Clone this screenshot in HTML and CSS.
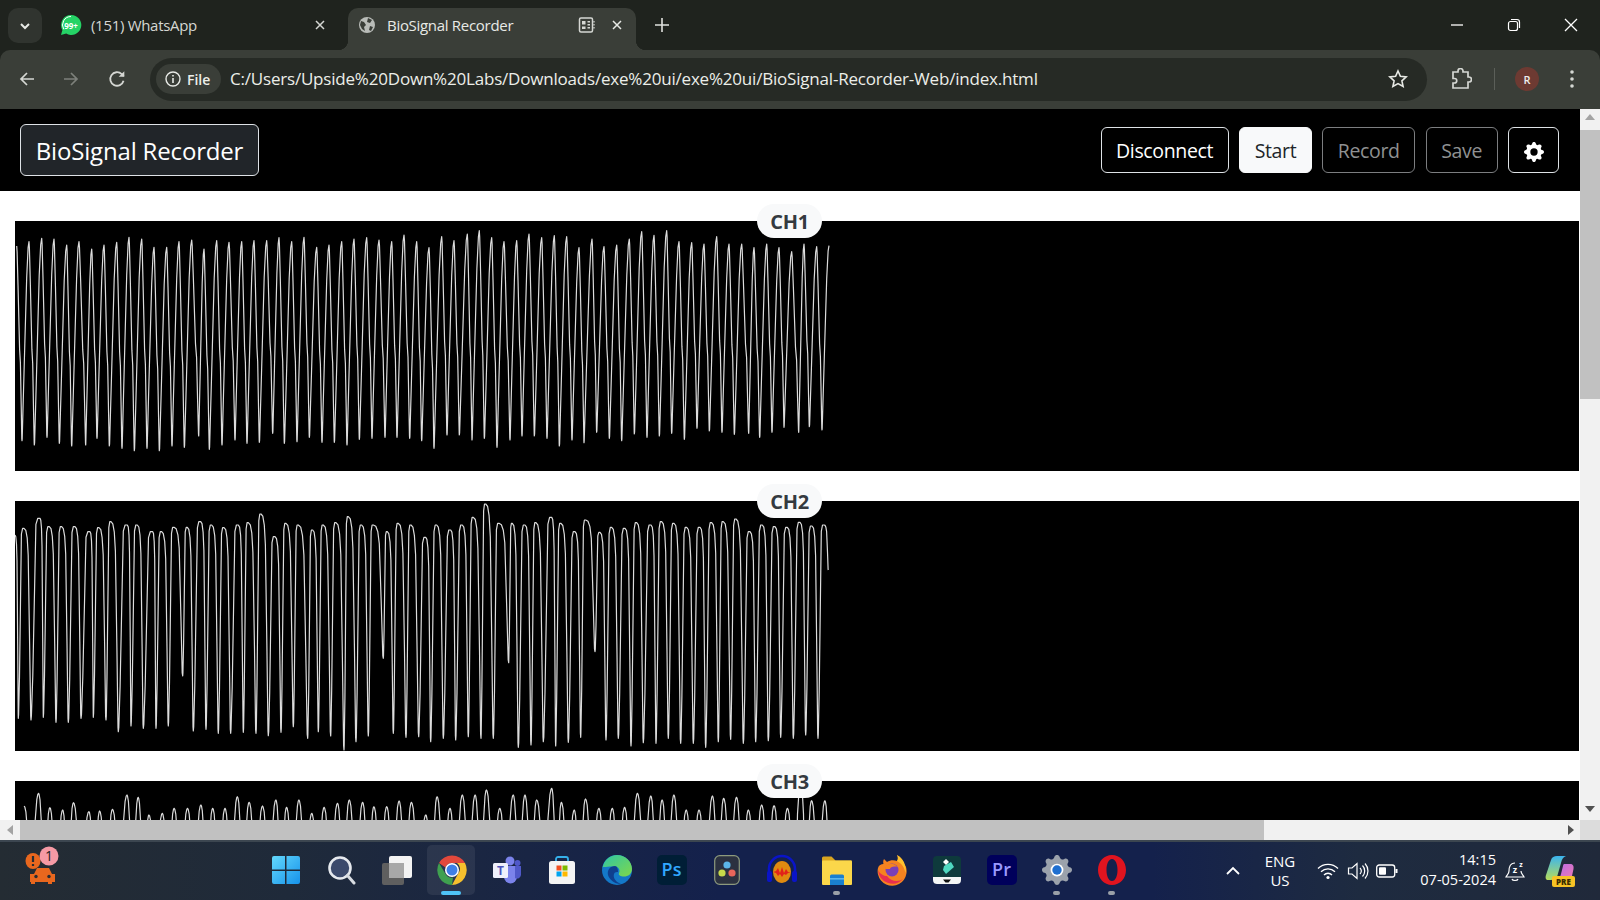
FILE: index.html
```html
<!DOCTYPE html>
<html lang="en">
<head>
    <meta charset="UTF-8">
    <title>BioSignal Recorder</title>
    <link rel="stylesheet" href="styles.css">
</head>
<body>
    <!-- browser tabs -->
    <div class="tabstrip">
        <div class="tab-search">
            <svg width="12" height="12" viewBox="0 0 12 12"><path d="M2 4l4 4 4-4" fill="none" stroke="#e8eae6" stroke-width="2"/></svg>
        </div>
        <div class="tab">
            <svg class="favicon" width="22" height="22" viewBox="0 0 22 22"><path d="M11 1a10 10 0 0 0-8.600 15L1 21l5.200-1.400A10 10 0 1 0 11 1z" fill="#25d366"/><path d="M11 2.500a8.500 8.500 0 0 0-7.300 12.800" fill="none" stroke="#fff" stroke-width="1"/><text x="11" y="14.500" class="favicon-count">99+</text></svg>
            <span class="tab-title">(151) WhatsApp</span>
            <svg class="tab-close" width="12" height="12" viewBox="0 0 12 12"><path d="M2 2l8 8M10 2l-8 8" stroke="#d5d7d3" stroke-width="1.500"/></svg>
        </div>
        <div class="tab tab-active">
            <svg class="favicon" width="18" height="18" viewBox="0 0 18 18"><circle cx="9" cy="9" r="8" fill="#b9bcb8"/><path d="M3 5l3 1 2 3-2 2 1 4-3-2-2-4zM10 2l4 2-2 3-3-1zM12 10l3 1-2 4-2-1z" fill="#3a3e38"/></svg>
            <span class="tab-title">BioSignal Recorder</span>
            <svg class="tab-reader" width="18" height="18" viewBox="0 0 18 18"><rect x="1.500" y="2" width="13" height="14" rx="1.500" fill="none" stroke="#d5d7d3" stroke-width="1.500"/><path d="M4 5h3.500v3.500H4zM4 10.500h3.500V13H4zM9.500 5H12v1.500H9.500zM9.500 8H12v1.500H9.500zM9.500 11H12v1.500H9.500z" fill="#d5d7d3"/><path d="M16 5v1.500M16 8v1.500M16 11v1.500" stroke="#d5d7d3" stroke-width="1.200"/></svg>
            <svg class="tab-close" width="12" height="12" viewBox="0 0 12 12"><path d="M2 2l8 8M10 2l-8 8" stroke="#e8eae6" stroke-width="1.500"/></svg>
        </div>
        <svg class="new-tab" width="14" height="14" viewBox="0 0 14 14"><path d="M7 0v14M0 7h14" stroke="#e0e2de" stroke-width="1.600"/></svg>
        <div class="window-controls">
            <svg width="14" height="14" viewBox="0 0 14 14"><path d="M1 7h12" stroke="#fff" stroke-width="1.300"/></svg>
            <svg width="14" height="14" viewBox="0 0 14 14"><rect x="1.500" y="3.500" width="9" height="9" rx="2" fill="none" stroke="#fff" stroke-width="1.200"/><path d="M4 1.500h6a2.500 2.500 0 0 1 2.500 2.500v6" fill="none" stroke="#fff" stroke-width="1.200"/></svg>
            <svg width="14" height="14" viewBox="0 0 14 14"><path d="M1 1l12 12M13 1L1 13" stroke="#fff" stroke-width="1.300"/></svg>
        </div>
    </div>

    <!-- address bar -->
    <div class="toolbar">
        <svg class="nav-icon" width="16" height="16" viewBox="0 0 16 16"><path d="M15 8H2M8 2L2 8l6 6" fill="none" stroke="#d5d7d3" stroke-width="1.700"/></svg>
        <svg class="nav-icon" width="16" height="16" viewBox="0 0 16 16"><path d="M1 8h13M8 2l6 6-6 6" fill="none" stroke="#7d807b" stroke-width="1.700"/></svg>
        <svg class="nav-icon" width="18" height="18" viewBox="0 0 16 16"><path d="M13.800 9.500A6 6 0 1 1 12.200 3.700L14 5.500" fill="none" stroke="#d5d7d3" stroke-width="1.600"/><path d="M14.500 1v5h-5z" fill="#d5d7d3"/></svg>
        <div class="omnibox">
            <div class="site-chip">
                <svg width="16" height="16" viewBox="0 0 16 16"><circle cx="8" cy="8" r="7" fill="none" stroke="#e8eae6" stroke-width="1.400"/><path d="M8 7v5M8 4v1.600" stroke="#e8eae6" stroke-width="1.600"/></svg>
                <span>File</span>
            </div>
            <span class="url">C:/Users/Upside%20Down%20Labs/Downloads/exe%20ui/exe%20ui/BioSignal-Recorder-Web/index.html</span>
            <svg class="star" width="20" height="20" viewBox="0 0 20 20"><path d="M10 2l2.400 5.300 5.800.6-4.300 3.900 1.200 5.700-5.100-2.900-5.100 2.900 1.200-5.700L1.800 7.900l5.800-.6z" fill="none" stroke="#e8eae6" stroke-width="1.600"/></svg>
        </div>
        <svg class="ext-icon" width="22" height="22" viewBox="0 0 22 22"><path d="M8 4V3a2.500 2.500 0 0 1 5 0v1h5v5h1a2.500 2.500 0 0 1 0 5h-1v6H3v-5h1.500a2 2 0 0 0 0-4.500H3V4z" fill="none" stroke="#d5d7d3" stroke-width="1.700"/></svg>
        <div class="toolbar-divider"></div>
        <div class="avatar">R</div>
        <svg class="menu-dots" width="4" height="18" viewBox="0 0 4 18"><circle cx="2" cy="2" r="1.800" fill="#d5d7d3"/><circle cx="2" cy="9" r="1.800" fill="#d5d7d3"/><circle cx="2" cy="16" r="1.800" fill="#d5d7d3"/></svg>
    </div>

    <div class="window-body">
        <div class="page">
            <header class="app-header">
                <div class="brand">BioSignal Recorder</div>
                <div class="actions">
                    <button class="btn">Disconnect</button>
                    <button class="btn btn-light">Start</button>
                    <button class="btn btn-disabled">Record</button>
                    <button class="btn btn-disabled">Save</button>
                    <button class="btn btn-icon" aria-label="Settings">
                        <svg width="20" height="20" viewBox="0 0 16 16"><path fill="#fff" d="M9.405 1.050c-.413-1.400-2.397-1.400-2.810 0l-.1.340a1.464 1.464 0 0 1-2.105.872l-.31-.17c-1.283-.698-2.686.705-1.987 1.987l.169.311c.446.820.023 1.841-.872 2.105l-.34.1c-1.400.413-1.400 2.397 0 2.810l.34.1a1.464 1.464 0 0 1 .872 2.105l-.17.31c-.698 1.283.705 2.686 1.987 1.987l.311-.169a1.464 1.464 0 0 1 2.105.872l.1.34c.413 1.400 2.397 1.400 2.810 0l.1-.34a1.464 1.464 0 0 1 2.105-.872l.31.17c1.283.698 2.686-.705 1.987-1.987l-.169-.311a1.464 1.464 0 0 1 .872-2.105l.34-.1c1.400-.413 1.400-2.397 0-2.810l-.34-.1a1.464 1.464 0 0 1-.872-2.105l.17-.31c.698-1.283-.705-2.686-1.987-1.987l-.311.169a1.464 1.464 0 0 1-2.105-.872l-.1-.34zM8 10.930a2.929 2.929 0 1 1 0-5.860 2.929 2.929 0 0 1 0 5.858z"/></svg>
                    </button>
                </div>
            </header>
            <main class="channels">
                <section class="channel"><span class="channel-label">CH1</span><svg class="trace" id="ch1"></svg></section>
                <section class="channel"><span class="channel-label">CH2</span><svg class="trace" id="ch2"></svg></section>
                <section class="channel"><span class="channel-label">CH3</span><svg class="trace" id="ch3"></svg></section>
            </main>
        </div>
        <div class="vscroll">
            <div class="arrow arrow-up"></div>
            <div class="vthumb"></div>
            <div class="arrow arrow-down"></div>
        </div>
    </div>

    <div class="hscroll">
        <div class="arrow arrow-left"></div>
        <div class="hthumb"></div>
        <div class="arrow arrow-right"></div>
        <div class="scroll-corner"></div>
    </div>

    <!-- windows taskbar -->
    <footer class="taskbar">
        <div class="taskbar-left">
            <svg width="40" height="40" viewBox="0 0 40 40"><ellipse cx="13" cy="15" rx="7.500" ry="8" fill="#e8671e"/><path d="M13 10v6M13 18v2" stroke="#262c33" stroke-width="2.200"/><path d="M14 28l3-6h12l3 6h3v8h-3v2h-4v-2H15v2h-4v-2H10v-8z" fill="#e8671e"/><circle cx="16" cy="30.500" r="1.700" fill="#262c33"/><circle cx="29" cy="30.500" r="1.700" fill="#262c33"/><circle cx="29" cy="10" r="9.500" fill="#f59aa5"/><text x="29" y="15" class="alert-count">1</text></svg>
        </div>
        <div class="taskbar-apps">
            <div class="app app-start">
                <svg width="30" height="30" viewBox="0 0 30 30"><defs><linearGradient id="win" x1="0" y1="0" x2="1" y2="1"><stop offset="0" stop-color="#63d8fc"/><stop offset="1" stop-color="#1692ea"/></linearGradient></defs><path d="M1 3a2 2 0 0 1 2-2h11v13.500H1zM15.500 1H27a2 2 0 0 1 2 2v11.500H15.500zM1 16h13v13H3a2 2 0 0 1-2-2zM15.500 16H29v11a2 2 0 0 1-2 2H15.500z" fill="url(#win)"/></svg>
            </div>
            <div class="app">
                <svg width="30" height="30" viewBox="0 0 30 30"><circle cx="13" cy="13" r="10.500" fill="#3c4a6c" stroke="#e6e9ee" stroke-width="2.600"/><path d="M20.500 20.500L27 28" stroke="#d8dce2" stroke-width="3" stroke-linecap="round"/></svg>
            </div>
            <div class="app">
                <svg width="32" height="32" viewBox="0 0 32 32"><rect x="1" y="9" width="22" height="22" rx="2" fill="#5f5f5f"/><rect x="8" y="2" width="23" height="22" rx="2" fill="#f3f3f3"/><rect x="8" y="9" width="15" height="15" fill="#a8a8a8"/></svg>
            </div>
            <div class="app app-active">
                <svg width="30" height="30" viewBox="0 0 30 30"><path d="M2 8A15 15 0 0 1 28 8H15a7 7 0 0 0-6.500 4.500z" fill="#e2483b"/><path d="M28 8a15 15 0 0 1-13 22l6.200-11.500A7 7 0 0 0 20 8z" fill="#f6c02d"/><path d="M15 30A15 15 0 0 1 2 8l6.500 11a7 7 0 0 0 7.500 3.500z" fill="#3fa04f"/><circle cx="15" cy="15" r="7" fill="#fff"/><circle cx="15" cy="15" r="5.500" fill="#3f7fe6"/></svg>
                <span class="run-active"></span>
            </div>
            <div class="app">
                <svg width="30" height="30" viewBox="0 0 30 30"><circle cx="18" cy="6" r="4.500" fill="#7b83eb"/><circle cx="25.500" cy="8" r="3" fill="#5059c9"/><path d="M12 11h13v11a6.500 6.500 0 0 1-13 0z" fill="#7b83eb"/><path d="M23 11h6v9a4 4 0 0 1-6 3z" fill="#5059c9"/><rect x="1" y="8" width="15" height="15" rx="1.500" fill="#eef0fb"/><text x="8.500" y="20" class="teams-t">T</text></svg>
            </div>
            <div class="app">
                <svg width="30" height="30" viewBox="0 0 30 30"><path d="M9 7V4a2 2 0 0 1 2-2h8a2 2 0 0 1 2 2v3" fill="none" stroke="#35b0ea" stroke-width="1.800"/><rect x="2" y="6" width="26" height="23" rx="2.500" fill="#f4f4f4"/><rect x="9.500" y="10.500" width="5" height="5" fill="#f25022"/><rect x="15.500" y="10.500" width="5" height="5" fill="#7fba00"/><rect x="9.500" y="16.500" width="5" height="5" fill="#00a4ef"/><rect x="15.500" y="16.500" width="5" height="5" fill="#ffb900"/></svg>
            </div>
            <div class="app">
                <svg width="32" height="32" viewBox="0 0 32 32"><defs><linearGradient id="edge" x1="0" y1="0" x2="1" y2="1"><stop offset="0" stop-color="#2fc6a5"/><stop offset="1" stop-color="#7fd84a"/></linearGradient></defs><circle cx="16" cy="16" r="15" fill="#1478c8"/><path d="M1.500 14C3 6 9 1 16 1c8.500 0 15 6.500 15 14 0 5-4 7.500-8 7.500-3.500 0-6-1.500-5-3.500 1-1.500 1-6-4-6.500-6-.5-10 1-12.500 .5z" fill="url(#edge)"/><path d="M14 12c-5 0-8 4-7 9 1 4 6 9 13 9l-2-1c-4-2-6-6-5-9 .5-2 3-2 4-2 0-3-1-6-3-6z" fill="#0f3f8e"/></svg>
            </div>
            <div class="app">
                <div class="tile tile-ps">Ps</div>
            </div>
            <div class="app">
                <svg width="26" height="30" viewBox="0 0 26 30"><rect x=".7" y=".7" width="24.600" height="28.600" rx="5" fill="#2b3140" stroke="#8d9a7d" stroke-width="1.200"/><circle cx="13" cy="10" r="3.600" fill="#5bb6e8"/><circle cx="8" cy="18" r="3.600" fill="#c6d94a"/><circle cx="18" cy="18" r="3.600" fill="#e8655b"/></svg>
            </div>
            <div class="app">
                <svg width="32" height="32" viewBox="0 0 32 32"><path d="M3 22V15a13 13 0 0 1 26 0v7" fill="none" stroke="#0a14c8" stroke-width="2.600"/><rect x="1" y="17" width="5" height="11" rx="2" fill="#0a14c8"/><rect x="26" y="17" width="5" height="11" rx="2" fill="#0a14c8"/><ellipse cx="16" cy="18" rx="9" ry="11" fill="#e08a10"/><path d="M7 18l3-1 2-3 2 5 2-6 2 6 2-4 2 3 3 0-3 1-2 2-2-1-2 3-2-3-2 2-2-3z" fill="#e2231a"/></svg>
            </div>
            <div class="app">
                <svg width="32" height="32" viewBox="0 0 32 32"><path d="M1 4a1.500 1.500 0 0 1 1.500-1.500h8l4 4h16V9H1z" fill="#d9a520"/><rect x="1" y="6.500" width="30" height="24.500" rx="1" fill="#fbd74a"/><path d="M9 22a1.500 1.500 0 0 1 1.500-1.500h11A1.500 1.500 0 0 1 23 22v9H9z" fill="#1a80cf"/><rect x="9" y="24" width="14" height="1.600" fill="#5cb5ea"/></svg>
                <span class="run-dot"></span>
            </div>
            <div class="app">
                <svg width="30" height="32" viewBox="0 0 30 32"><path d="M27 10c-1-4-4-7-7-9 2 3 1 5 0 6-3-1-7-1-10 1L7 5C6 7 6 8 6.500 10 4 10 2 11 1 14a14.500 14.500 0 1 0 28-1 10 10 0 0 0-2-3z" fill="#f58320"/><path d="M1 16a14.500 14.500 0 0 0 25 9c-4 3-12 3-16-3-3 0-7-2-9-6z" fill="#e8304f"/><path d="M20 1c4 2 7 6 8 10 1 3 1 6 .5 8-1-5-3-9-8.500-12 1-1.500 1-4 0-6z" fill="#ffc12e"/><circle cx="15" cy="16" r="6.500" fill="#7b3fb8"/><path d="M9 12c3-3 9-3 11 1-3-1-7 0-7 2H8z" fill="#f58320"/></svg>
            </div>
            <div class="app">
                <svg width="30" height="30" viewBox="0 0 30 30"><path d="M1 5a4 4 0 0 1 4-4h20a4 4 0 0 1 4 4v18H1z" fill="#0e3a3c"/><path d="M1 22h28v3c0 3-2 4-4 4H5c-2 0-4-1-4-4z" fill="#f4f6f6"/><path d="M12 11l7-4 3 5-8 7-3-4z" fill="#4fd8c0"/><path d="M14 4l3 3-3 3-3-3z" fill="#fff"/><path d="M11 24.500h8l-2.500 3h-3z" fill="#111"/></svg>
            </div>
            <div class="app">
                <div class="tile tile-pr">Pr</div>
            </div>
            <div class="app">
                <svg width="30" height="30" viewBox="0 0 16 16"><path fill="#9ba2ac" d="M9.405 1.050c-.413-1.400-2.397-1.400-2.810 0l-.1.340a1.464 1.464 0 0 1-2.105.872l-.31-.17c-1.283-.698-2.686.705-1.987 1.987l.169.311c.446.820.023 1.841-.872 2.105l-.34.1c-1.400.413-1.400 2.397 0 2.810l.34.1a1.464 1.464 0 0 1 .872 2.105l-.17.31c-.698 1.283.705 2.686 1.987 1.987l.311-.169a1.464 1.464 0 0 1 2.105.872l.1.34c.413 1.400 2.397 1.400 2.810 0l.1-.34a1.464 1.464 0 0 1 2.105-.872l.31.17c1.283.698 2.686-.705 1.987-1.987l-.169-.311a1.464 1.464 0 0 1 .872-2.105l.34-.1c1.400-.413 1.400-2.397 0-2.810l-.34-.1a1.464 1.464 0 0 1-.872-2.105l.17-.31c.698-1.283-.705-2.686-1.987-1.987l-.311.169a1.464 1.464 0 0 1-2.105-.872l-.1-.34z"/><circle cx="8" cy="8" r="3.400" fill="#fff"/><circle cx="8" cy="8" r="2.500" fill="#1f6fd0"/></svg>
                <span class="run-dot"></span>
            </div>
            <div class="app">
                <svg width="30" height="32" viewBox="0 0 30 32"><path fill-rule="evenodd" d="M15 1c8 0 14 6.500 14 15s-6 15-14 15S1 24.500 1 16 7 1 15 1zm0 4c-3.500 0-5.500 5-5.500 11S11.500 27 15 27s5.500-5 5.500-11S18.500 5 15 5z" fill="#e0141f"/></svg>
                <span class="run-dot"></span>
            </div>
        </div>
        <div class="tray">
            <svg class="tray-chevron" width="16" height="10" viewBox="0 0 16 10"><path d="M2 8l6-6 6 6" fill="none" stroke="#fff" stroke-width="1.800"/></svg>
            <div class="tray-lang">ENG<br>US</div>
            <svg class="tray-wifi" width="22" height="18" viewBox="0 0 22 18"><path d="M1 6.500a14 14 0 0 1 20 0M4 9.800a10 10 0 0 1 14 0M7 13a5.500 5.500 0 0 1 8 0" fill="none" stroke="#fff" stroke-width="1.300"/><circle cx="11" cy="15.500" r="1.600" fill="#fff"/></svg>
            <svg class="tray-sound" width="22" height="20" viewBox="0 0 22 20"><path d="M1.500 7v6h3.500l5 4.500v-15L5 7z" fill="none" stroke="#fff" stroke-width="1.200"/><path d="M13 7a4.500 4.500 0 0 1 0 6M15.500 4.500a8 8 0 0 1 0 11M18 2.500a11 11 0 0 1 0 15" fill="none" stroke="#fff" stroke-width="1.200"/></svg>
            <svg class="tray-battery" width="22" height="14" viewBox="0 0 22 14"><rect x=".7" y="1" width="18" height="12" rx="2.500" fill="none" stroke="#fff" stroke-width="1.300"/><rect x="3" y="3.300" width="7" height="7.400" rx="1" fill="#fff"/><path d="M20.500 5v4" stroke="#fff" stroke-width="2"/></svg>
            <div class="tray-clock">14:15<br>07-05-2024</div>
            <svg class="tray-bell" width="20" height="22" viewBox="0 0 20 22"><path d="M10 3C5 3 4 8 4 11c0 3-2 4-3 6h18c-1-2-3-3-3-6M7 19c.5 2 5.500 2 6 0" fill="none" stroke="#fff" stroke-width="1.200"/><text x="10" y="13" class="bell-z">z</text><text x="16" y="7" class="bell-z bell-z-small">z</text></svg>
            <svg class="tray-copilot" width="30" height="32" viewBox="0 0 30 32"><defs><linearGradient id="cop-a" x1="0" y1="0" x2="0" y2="1"><stop offset="0" stop-color="#3bb4ef"/><stop offset="1" stop-color="#b5dc5a"/></linearGradient><linearGradient id="cop-b" x1="0" y1="0" x2="1" y2="1"><stop offset="0" stop-color="#b56be8"/><stop offset="1" stop-color="#f07ab0"/></linearGradient></defs><path d="M12 1h9c-3 1-4 3-5 7l-4 14c-1 2-3 3-6 3H3C1 25 0 23 1 20l5-15c1-3 3-4 6-4z" fill="url(#cop-a)"/><path d="M19 9h6c3 0 4 2 3.500 5L27 21c-1 3-2 4-5 4H12c2-1 3-2 4-6l2-8c.2-1 .5-2 1-2z" fill="url(#cop-b)"/><rect x="7" y="21" width="23" height="11" rx="2" fill="#f7c325"/><text x="18.500" y="29.500" class="copilot-pre">PRE</text></svg>
        </div>
    </footer>

    <script src="traces.js"></script>
</body>
</html>
```

FILE: styles.css
```css
* {
    box-sizing: border-box;
}

body {
    margin: 0;
    width: 1600px;
    height: 900px;
    overflow: hidden;
    display: flex;
    flex-direction: column;
    background-color: #1f231e;
    font-family: "Open Sans", "Noto Sans", sans-serif;
}

svg {
    display: block;
    flex: none;
}

/* tabs */
.tabstrip {
    height: 50px;
    flex: none;
    display: flex;
    align-items: flex-start;
    background-color: #1f231e;
    color: #d5d7d3;
    font-size: 15px;
}

.tab-search {
    width: 34px;
    height: 35px;
    margin: 8px 0 0 8px;
    border-radius: 10px;
    background-color: #30342f;
    display: flex;
    align-items: center;
    justify-content: center;
}

.tab {
    height: 42px;
    margin-top: 8px;
    display: flex;
    align-items: center;
    position: relative;
    width: 298px;
    padding: 0 14px 8px 18px;
}

.tab-active {
    width: 288px;
    margin-left: 8px;
    padding: 0 13px 8px 10px;
    background-color: #3a3e38;
    border-radius: 10px 10px 0 0;
    color: #e8eae6;
}

.tab-active::before,
.tab-active::after {
    content: "";
    position: absolute;
    bottom: 0;
    width: 10px;
    height: 10px;
}

.tab-active::before {
    left: -10px;
    background: radial-gradient(circle at 0 0, transparent 10px, #3a3e38 10.500px);
}

.tab-active::after {
    right: -10px;
    background: radial-gradient(circle at 100% 0, transparent 10px, #3a3e38 10.500px);
}

.tab-title {
    margin-left: 9px;
    flex: 1;
    letter-spacing: -0.3px;
    white-space: nowrap;
}

.tab-active .favicon {
    margin-right: 2px;
}

.tab-reader {
    margin-right: 15px;
}

.favicon-count {
    font-size: 8px;
    font-weight: 700;
    fill: #fff;
    text-anchor: middle;
}

.new-tab {
    margin: 18px 0 0 19px;
}

.window-controls {
    margin: 18px 22px 0 auto;
    display: flex;
    gap: 43px;
}

/* address bar */
.toolbar {
    height: 59px;
    flex: none;
    display: flex;
    align-items: center;
    padding-bottom: 1px;
    background-color: #3a3e38;
    border-radius: 10px 10px 0 0;
}

.nav-icon {
    margin-left: 19px;
}

.nav-icon + .nav-icon {
    margin-left: 28px;
}

.nav-icon + .nav-icon + .nav-icon {
    margin-left: 29px;
}

.omnibox {
    width: 1277px;
    height: 43px;
    margin-left: 24px;
    padding: 0 19px 0 6px;
    display: flex;
    align-items: center;
    border-radius: 22px;
    background-color: #262a25;
    color: #eceee9;
}

.site-chip {
    width: 65px;
    height: 30px;
    padding-left: 9px;
    display: flex;
    align-items: center;
    gap: 6px;
    border-radius: 15px;
    background-color: #3a3e38;
    font-size: 14px;
    font-weight: 600;
}

.url {
    margin-left: 9px;
    padding-bottom: 2px;
    flex: 1;
    font-size: 17px;
    letter-spacing: -0.2px;
    white-space: nowrap;
}

.ext-icon {
    margin-left: 23px;
}

.toolbar-divider {
    width: 1px;
    height: 22px;
    margin-left: 22px;
    background-color: #5b5f59;
}

.avatar {
    width: 24px;
    height: 24px;
    margin-left: 20px;
    border-radius: 50%;
    background-color: #6d3a32;
    color: #eee;
    font-size: 11px;
    font-weight: 600;
    display: flex;
    align-items: center;
    justify-content: center;
}

.menu-dots {
    margin-left: 31px;
}

/* page */
.window-body {
    flex: 1;
    min-height: 0;
    display: flex;
}

.page {
    width: 1580px;
    overflow: hidden;
    background-color: #fff;
}

.app-header {
    height: 82px;
    padding: 0 21px 0 20px;
    display: flex;
    align-items: center;
    justify-content: space-between;
    background-color: #000;
}

.brand {
    height: 52px;
    width: 239px;
    display: flex;
    align-items: center;
    justify-content: center;
    border: 1px solid #dee2e6;
    border-radius: 6px;
    background-color: #212529;
    color: #fff;
    font-size: 24px;
    letter-spacing: -0.17px;
}

.actions {
    display: flex;
    gap: 10.500px;
}

.btn {
    height: 46px;
    padding: 0 14.500px;
    border: 1px solid #dee2e6;
    border-radius: 6px;
    background-color: #000;
    color: #fff;
    font-family: inherit;
    font-size: 19.500px;
    letter-spacing: -0.35px;
}

.btn-light {
    background-color: #f8f9fa;
    color: #212529;
    border-color: #f8f9fa;
}

.btn-disabled {
    color: #8f9192;
    border-color: #7c7e80;
}

.btn-icon {
    width: 51px;
    padding: 3px 0 0;
    display: flex;
    align-items: center;
    justify-content: center;
}

.channels {
    padding: 30px 1px 0 15px;
    display: flex;
    flex-direction: column;
    gap: 30px;
}

.channel {
    height: 250px;
    flex: none;
    position: relative;
    background-color: #000;
}

.channel-label {
    position: absolute;
    top: -17px;
    left: 742px;
    z-index: 1;
    width: 65px;
    height: 34px;
    border-radius: 17px;
    background-color: #f8f9fa;
    color: #343a40;
    font-size: 20px;
    font-weight: 700;
    letter-spacing: -0.3px;
    line-height: 36px;
    text-align: center;
}

.trace {
    width: 100%;
    height: 100%;
    position: absolute;
    left: 0;
    top: 0;
    overflow: hidden;
}

.trace path {
    fill: none;
    stroke: #dcdcdc;
    stroke-width: 1.200;
    stroke-linejoin: round;
}

/* scrollbars */
.vscroll {
    width: 20px;
    display: flex;
    flex-direction: column;
    align-items: center;
    background-color: #f1f1f1;
}

.vthumb {
    width: 100%;
    height: 269px;
    margin-top: 10px;
    background-color: #c1c1c1;
}

.hscroll {
    height: 20px;
    flex: none;
    display: flex;
    align-items: center;
    background-color: #f1f1f1;
}

.hthumb {
    width: 1244px;
    height: 100%;
    margin-left: 7px;
    background-color: #c1c1c1;
}

.scroll-corner {
    width: 20px;
    height: 100%;
    background-color: #dcdcdc;
}

.arrow {
    width: 0;
    height: 0;
    border: 5px solid transparent;
    flex: none;
}

.arrow-up {
    margin-top: 5px;
    border-top: 0;
    border-bottom: 6px solid #a3a3a3;
}

.arrow-down {
    margin-top: auto;
    margin-bottom: 8px;
    border-bottom: 0;
    border-top: 6px solid #505050;
}

.arrow-left {
    margin-left: 7px;
    border-left: 0;
    border-right: 6px solid #a3a3a3;
}

.arrow-right {
    margin-left: auto;
    margin-right: 6px;
    border-right: 0;
    border-left: 6px solid #505050;
}

/* taskbar */
.taskbar {
    height: 60px;
    flex: none;
    display: flex;
    border-top: 2px solid #3c4650;
    background: linear-gradient(90deg, #242c33 0%, #1f2a3a 18%, #14214c 45%, #14214c 72%, #1e2b40 85%, #20293a 100%);
    color: #fff;
}

.taskbar-left {
    width: 258px;
    padding: 4px 0 0 20px;
}

.alert-count {
    font-size: 14px;
    fill: #222;
    text-anchor: middle;
}

.taskbar-apps {
    display: flex;
}

.app {
    width: 55px;
    height: 56px;
    position: relative;
    display: flex;
    align-items: center;
    justify-content: center;
}

.app-start {
    width: 56px;
}

.app-active::before {
    content: "";
    position: absolute;
    left: 3px;
    top: 3px;
    width: 48px;
    height: 50px;
    border-radius: 5px;
    background-color: rgba(255, 255, 255, 0.07);
}

.app svg,
.tile {
    position: relative;
}

.run-active {
    position: absolute;
    left: 17px;
    bottom: 3px;
    width: 20px;
    height: 4px;
    border-radius: 2px;
    background-color: #4fc3f7;
}

.run-dot {
    position: absolute;
    left: 24px;
    bottom: 3px;
    width: 7px;
    height: 4px;
    border-radius: 2px;
    background-color: #9aa0a8;
}

.tile {
    width: 30px;
    height: 30px;
    border-radius: 5px;
    text-align: center;
    font-size: 18px;
    font-weight: 600;
    line-height: 29px;
}

.tile-ps {
    background-color: #001e36;
    color: #31a8ff;
}

.tile-pr {
    background-color: #00005b;
    color: #9999ff;
}

.teams-t {
    font-size: 12px;
    font-weight: 700;
    fill: #4b53bc;
    text-anchor: middle;
}

.tray {
    margin-left: 86px;
    display: flex;
    align-items: center;
    font-size: 14.500px;
    line-height: 19px;
}

.tray-lang {
    width: 40px;
    margin-left: 19px;
    font-size: 15px;
    text-align: center;
}

.tray-wifi {
    margin-left: 17px;
}

.tray-sound {
    margin-left: 8px;
}

.tray-battery {
    margin-left: 7px;
}

.tray-clock {
    width: 84px;
    margin-left: 14px;
    padding-bottom: 2px;
    line-height: 20px;
    text-align: right;
    white-space: nowrap;
}

.tray-bell {
    margin-left: 9px;
}

.bell-z {
    font-size: 9px;
    font-weight: 700;
    fill: #fff;
    text-anchor: middle;
}

.bell-z-small {
    font-size: 7px;
}

.tray-copilot {
    margin-left: 20px;
}

.copilot-pre {
    font-size: 8px;
    font-weight: 800;
    fill: #3a2c00;
    text-anchor: middle;
}
```

FILE: traces.js
```js
// Peak and trough positions were read off the recording, in 1/3 px steps.
const SECOND = 1260;

const ch1Tops = [[50,138],[87,125],[125,115],[162,117],[200,135],[237,125],[275,147],[312,135],[350,127],[387,112],[425,117],[462,142],[500,142],[537,125],[575,120],[612,147],[650,122],[687,127],[725,125],[762,122],[800,122],[837,113],[875,125],[912,112],[950,142],[987,135],[1025,125],[1062,117],[1100,113],[1137,120],[1175,125],[1212,105],[1250,125]]
    .concat(shift([[27,143],[65,110],[102,122],[142,102],[178,92],[215,113],[252,125],[290,122],[327,102],[365,113],[403,107],[440,110],[477,143],[516,117],[552,140],[590,135],[628,117],[665,95],[702,106],[740,92],[777,125],[815,128],[852,132],[890,110],[927,132],[965,132],[1002,143],[1040,132],[1077,143],[1115,155],[1152,132],[1190,140],[1227,137]]));

const ch1Bottoms = [[66,722],[103,735],[141,712],[178,730],[215,738],[257,735],[291,715],[328,738],[366,745],[403,752],[441,745],[478,752],[516,738],[553,742],[596,708],[628,748],[666,735],[705,720],[741,730],[778,727],[818,700],[853,730],[891,725],[928,712],[966,727],[1003,727],[1041,735],[1078,718],[1116,715],[1155,712],[1191,712],[1229,715]]
    .concat(shift([[5,722],[42,745],[81,705],[118,705],[156,720],[193,715],[231,742],[270,720],[306,708],[343,708],[381,715],[418,738],[456,720],[492,728],[530,697],[568,715],[605,722],[643,702],[681,712],[718,708],[755,700],[793,718],[831,685],[868,693],[906,697],[943,703],[986,700],[1019,712],[1056,697],[1092,682],[1136,697],[1168,680],[1206,690]]));

const ch2Tops = [[45,135],[72,115],[120,85],[148,110],[185,110],[225,110],[270,125],[297,113],[333,95],[382,105],[412,105],[458,125],[485,125],[522,112],[562,112],[602,95],[635,105],[672,113],[715,105],[745,98],[783,72],[825,140],[858,100],[895,105],[938,120],[970,105],[1008,98],[1045,80],[1085,105],[1120,105],[1162,125],[1195,100],[1233,105]]
    .concat(shift([[17,142],[50,105],[92,120],[127,105],[160,82],[197,42],[237,100],[277,100],[315,105],[348,98],[395,82],[423,100],[465,125],[497,90],[540,127],[575,112],[615,115],[650,98],[693,105],[725,95],[762,100],[800,112],[840,112],[875,98],[910,95],[948,87],[990,125],[1027,105],[1065,110],[1102,112],[1140,97],[1176,108],[1212,105]]));

const ch2Bottoms = [[55,685],[93,690],[130,682],[168,697],[205,697],[243,685],[280,682],[318,690],[355,725],[393,708],[430,715],[468,715],[505,708],[548,558],[580,723],[618,718],[655,730],[692,730],[730,727],[768,730],[805,737],[843,727],[880,710],[923,745],[955,725],[992,738],[1032,780],[1068,755],[1105,738],[1150,505],[1180,730],[1218,742],[1256,740]]
    .concat(shift([[32,755],[70,745],[107,750],[145,740],[183,745],[220,745],[266,518],[295,772],[333,765],[370,755],[407,768],[445,757],[482,742],[525,485],[558,750],[595,745],[633,768],[670,758],[708,760],[745,745],[782,760],[820,760],[857,772],[895,755],[932,748],[970,760],[1007,755],[1045,752],[1082,742],[1120,745],[1157,735],[1194,745],[1225,240]]));

// third channel is cut off by the window, only the tops show
const ch3Tops = [[45,108],[72,70],[93,113],[117,120],[137,98],[166,125],[186,123],[210,118],[237,75],[258,82],[278,135],[303,130],[325,115],[350,115],[375,105],[397,115],[420,115],[443,80],[465,97],[490,108],[515,90],[535,112],[558,90],[582,130],[605,112],[630,100],[652,90],[677,97],[698,110],[722,110],[745,93],[768,97],[795,135],[816,80],[840,115],[863,75],[887,75],[908,60],[933,115],[958,75],[980,75],[1002,90],[1030,55],[1048,97],[1072,120],[1093,87],[1118,115],[1143,115],[1166,112],[1190,70],[1215,78],[1236,90],[1258,75],[1281,120],[1305,120],[1330,78],[1351,85],[1375,82],[1397,120],[1422,105],[1445,107],[1470,115],[1495,40],[1515,92],[1540,92]]
    .map(p => [p[0] * 1.607, p[1]]);

const ch3Bottoms = ch3Tops.slice(0, -1).map((p, i) => [(p[0] + ch3Tops[i + 1][0]) / 2, 700]);
ch3Bottoms.push([2490, 700]);

// [share of the way along x, share of the way along y] between two extremes
const sharpFall = [[0.08, 0.03], [0.25, 0.2], [0.55, 0.53], [0.7, 0.6], [0.85, 0.82], [0.97, 0.99]];
const sharpRise = [[0.03, 0.01], [0.29, 0.34], [0.67, 0.82], [0.87, 0.97]];
const flatFall = [[0.25, 0.01], [0.45, 0.05], [0.6, 0.14], [0.8, 0.6], [0.95, 0.98]];
const flatRise = [[0.05, 0.02], [0.2, 0.22], [0.55, 0.97], [0.75, 1]];
const thinFall = [[0.1, 0.005], [0.25, 0.03], [0.5, 0.14], [0.75, 0.5]];
const thinRise = [[0.25, 0.5], [0.5, 0.86], [0.75, 0.97], [0.9, 0.995]];

function shift(points) {
    return points.map(p => [p[0] + SECOND, p[1]]);
}

function drawTrace(id, tops, bottoms, top, rise, fall) {
    const marked = tops.map(p => [p[0], p[1], true]).concat(bottoms.map(p => [p[0], p[1], false]));
    marked.sort((a, b) => a[0] - b[0]);

    const points = [];
    marked.forEach((a, i) => {
        points.push(a);
        const b = marked[i + 1];
        if (!b) return;
        (a[2] ? fall : rise).forEach(s => {
            points.push([a[0] + s[0] * (b[0] - a[0]), a[1] + s[1] * (b[1] - a[1])]);
        });
    });

    const d = points.map((p, i) => {
        const x = (p[0] - 45) / 3;
        const y = (p[1] - top) / 3;
        return (i ? "L" : "M") + x.toFixed(1) + " " + y.toFixed(1);
    }).join("");

    const path = document.createElementNS("http://www.w3.org/2000/svg", "path");
    path.setAttribute("d", d);
    document.getElementById(id).appendChild(path);
}

drawTrace("ch1", ch1Tops, ch1Bottoms, 63, sharpRise, sharpFall);
drawTrace("ch2", ch2Tops, ch2Bottoms, 33, flatRise, flatFall);
drawTrace("ch3", ch3Tops, ch3Bottoms, 33, thinRise, thinFall);
```
